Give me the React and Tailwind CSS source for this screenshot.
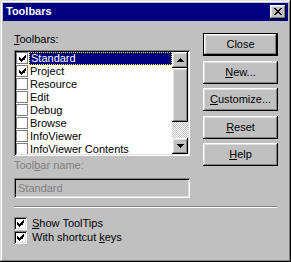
import React from "react";

const raised =
  "shadow-[inset_-1px_-1px_#000,inset_1px_1px_#fff,inset_-2px_-2px_#808080,inset_2px_2px_#dfdfdf]";
const sunken =
  "shadow-[inset_1px_1px_#808080,inset_-1px_-1px_#fff,inset_2px_2px_#000,inset_-2px_-2px_#dfdfdf]";

function Check({ className = "" }) {
  return (
    <svg width="7" height="7" viewBox="0 0 7 7" shapeRendering="crispEdges" className={className}>
      <path
        d="M6 0h1v3H6zM5 1h1v4H5zM0 2h1v3H0zM1 3h1v3H1zM2 4h1v3H2zM3 3h1v3H3zM4 2h1v3H4z"
        fill="#000"
      />
    </svg>
  );
}

function Arrow({ down }) {
  return (
    <svg width="7" height="4" viewBox="0 0 7 4" shapeRendering="crispEdges">
      <path
        d={down ? "M0 0h7v1H0zM1 1h5v1H1zM2 2h3v1H2zM3 3h1v1H3z" : "M3 0h1v1H3zM2 1h3v1H2zM1 2h5v1H1zM0 3h7v1H0z"}
        fill="#000"
      />
    </svg>
  );
}

const items = [
  { name: "Standard", on: true, sel: true },
  { name: "Project", on: true },
  { name: "Resource" },
  { name: "Edit" },
  { name: "Debug" },
  { name: "Browse" },
  { name: "InfoViewer" },
  { name: "InfoViewer Contents" },
];

function Button({ children, isDefault }) {
  return (
    <button
      className={`w-[75px] h-[23px] bg-[#c0c0c0] text-black text-[11px] leading-[13px] flex items-center justify-center ${
        isDefault ? "border border-black" : ""
      } ${raised}`}
    >
      {children}
    </button>
  );
}

export default function App() {
  return (
    <div
      className={`w-[291px] h-[262px] bg-[#c0c0c0] p-[3px] flex flex-col font-['Liberation_Sans',Arial,sans-serif] text-[11px] leading-[13px] text-black select-none shadow-[inset_-1px_-1px_#000,inset_1px_1px_#dfdfdf,inset_-2px_-2px_#808080,inset_2px_2px_#fff]`}
    >
      {/* title bar */}
      <div className="h-[18px] bg-[#000080] flex items-center pl-[3px] pr-[2px]">
        <span className="text-white font-bold text-[11px] flex-1 pb-[1px]">Toolbars</span>
        <div className={`w-[16px] h-[14px] bg-[#c0c0c0] flex items-center justify-center ${raised}`}>
          <svg width="8" height="7" viewBox="0 0 8 7" shapeRendering="crispEdges" className="mr-[1px] mb-[1px]">
            <path
              d="M0 0h2v1H0zM6 0h2v1H6zM1 1h2v1H1zM5 1h2v1H5zM2 2h4v1H2zM3 3h2v1H3zM2 4h4v1H2zM1 5h2v1H1zM5 5h2v1H5zM0 6h2v1H0zM6 6h2v1H6z"
              fill="#000"
            />
          </svg>
        </div>
      </div>

      {/* body */}
      <div className="flex flex-col pl-[11px] pt-[12px]">
        <div className="flex">
          <div className="w-[176px] flex flex-col">
            <div>
              <span className="underline">T</span>oolbars:
            </div>
            <div className={`mt-[4px] h-[106px] bg-white p-[2px] flex ${sunken}`}>
              <div className="flex-1 flex flex-col overflow-hidden">
                {items.map((it) => (
                  <div key={it.name} className="h-[13px] flex shrink-0">
                    <div className="w-[13px] flex items-start">
                      <div className="w-[12px] h-[12px] border border-[#808080] bg-white flex items-center justify-center">
                        {it.on && <Check />}
                      </div>
                    </div>
                    <div
                      className={`flex-1 h-[13px] flex items-center pl-[1px] ${
                        it.sel ? "bg-[#000080] text-white border border-dotted border-[#ffff00]" : ""
                      }`}
                    >
                      {it.name}
                    </div>
                  </div>
                ))}
              </div>
              <div className="w-[16px] flex flex-col">
                <div className={`h-[16px] bg-[#c0c0c0] flex items-center justify-center ${raised}`}>
                  <Arrow />
                </div>
                <div className={`h-[54px] bg-[#c0c0c0] ${raised}`} />
                <div className="h-[16px] bg-[conic-gradient(#fff_25%,#c0c0c0_0_50%,#fff_0_75%,#c0c0c0_0)] bg-[length:2px_2px]" />
                <div className={`h-[16px] bg-[#c0c0c0] flex items-center justify-center ${raised}`}>
                  <Arrow down />
                </div>
              </div>
            </div>
            <div className="mt-[3px] text-[#808080]">
              Tool<span className="underline">b</span>ar name:
            </div>
            <div className={`mt-[6px] h-[20px] flex items-center pl-[4px] text-[#808080] ${sunken}`}>
              Standard
            </div>
          </div>

          <div className="ml-[13px] flex flex-col">
            <Button isDefault>Close</Button>
            <div className="mt-[5px]">
              <Button>
                <span>
                  <span className="underline">N</span>ew...
                </span>
              </Button>
            </div>
            <div className="mt-[4px]">
              <Button>
                <span>
                  <span className="underline">C</span>ustomize...
                </span>
              </Button>
            </div>
            <div className="mt-[5px]">
              <Button>
                <span>
                  <span className="underline">R</span>eset
                </span>
              </Button>
            </div>
            <div className="mt-[4px]">
              <Button>
                <span>
                  <span className="underline">H</span>elp
                </span>
              </Button>
            </div>
          </div>
        </div>

        <div className="mt-[8px] w-[263px] h-[2px] border-t border-t-[#808080] border-b border-b-white" />

        <div className="mt-[9px] flex flex-col gap-[1px]">
          <div className="flex items-center h-[13px]">
            <div className={`w-[13px] h-[13px] bg-white flex items-center justify-center ${sunken}`}>
              <Check />
            </div>
            <span className="ml-[5px]">
              <span className="underline">S</span>how ToolTips
            </span>
          </div>
          <div className="flex items-center h-[13px]">
            <div className={`w-[13px] h-[13px] bg-white flex items-center justify-center ${sunken}`}>
              <Check />
            </div>
            <span className="ml-[5px]">
              With shortcut <span className="underline">k</span>eys
            </span>
          </div>
        </div>
      </div>
    </div>
  );
}
